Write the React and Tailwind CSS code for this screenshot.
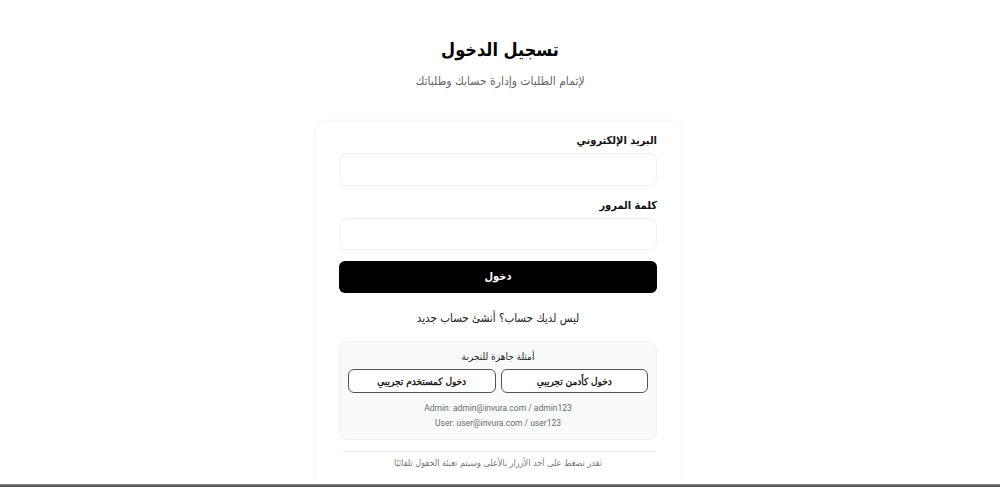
export default function App() {
  const font = { fontFamily: '"DejaVu Sans Condensed", "DejaVu Sans", sans-serif' };
  const latin = { fontFamily: 'Roboto, Inter, sans-serif' };
  return (
    <div dir="rtl" className="h-[487px] w-full bg-white flex flex-col overflow-hidden" style={font}>
      <div className="flex-1 flex flex-col items-center overflow-hidden">
        <h1 className="mt-[36px] text-[18px] leading-[28px] font-bold text-black">تسجيل الدخول</h1>
        <p className="mt-[7px] text-[12px] leading-[20px] text-[#666]">لإتمام الطلبات وإدارة حسابك وطلباتك</p>
        <div className="mt-[31px] mr-[4px] w-[364px] flex-1 bg-white rounded-t-lg shadow-[0_0_6px_rgba(0,0,0,0.06)] px-[23px] pt-[9px]">
          <label className="block text-[11px] leading-[20px] font-bold text-[#111]">البريد الإلكتروني</label>
          <div className="mt-[2px] h-[33px] w-full rounded-lg border border-[#efefef] bg-white"></div>
          <label className="block mt-[10px] text-[11px] leading-[20px] font-bold text-[#111]">كلمة المرور</label>
          <div className="mt-[2px] h-[32px] w-full rounded-lg border border-[#efefef] bg-white"></div>
          <button className="mt-[11px] h-[32px] w-full rounded-md bg-black text-white text-[11px] font-bold">دخول</button>
          <p className="mt-[15px] text-center text-[11.5px] leading-[20px] text-[#222]">ليس لديك حساب؟ أنشئ حساب جديد</p>
          <div className="mt-[13px] rounded-lg border border-[#f0f0f0] bg-[#f9fafb] px-[8px] pt-[7px] pb-[8px]">
            <p className="text-center text-[10px] leading-[16px] text-[#222]">أمثلة جاهزة للتجربة</p>
            <div className="mt-[4px] grid grid-cols-2 gap-[5px]">
              <button className="h-[24px] rounded-md border border-[#555] bg-white text-[10px] text-[#111] [-webkit-text-stroke:0.35px_#111]">دخول كأدمن تجريبي</button>
              <button className="h-[24px] rounded-md border border-[#555] bg-white text-[10px] text-[#111] [-webkit-text-stroke:0.35px_#111]">دخول كمستخدم تجريبي</button>
            </div>
            <p dir="ltr" className="mt-[8px] text-center text-[8.5px] leading-[15px] text-[#6b6b6b]" style={latin}>Admin: admin@invura.com / admin123</p>
            <p dir="ltr" className="text-center text-[8.5px] leading-[15px] text-[#6b6b6b]" style={latin}>User: user@invura.com / user123</p>
          </div>
          <div className="mt-[11px] h-px bg-[#f0f0f0]"></div>
          <p className="mt-[4px] text-center text-[9px] leading-[15px] text-[#777]">تقدر تضغط على أحد الأزرار بالأعلى وسيتم تعبئة الحقول تلقائيًا</p>
        </div>
      </div>
      <div className="h-[3px] bg-[#5a5a5a] border-t border-[#8a8a8a]"></div>
    </div>
  );
}
